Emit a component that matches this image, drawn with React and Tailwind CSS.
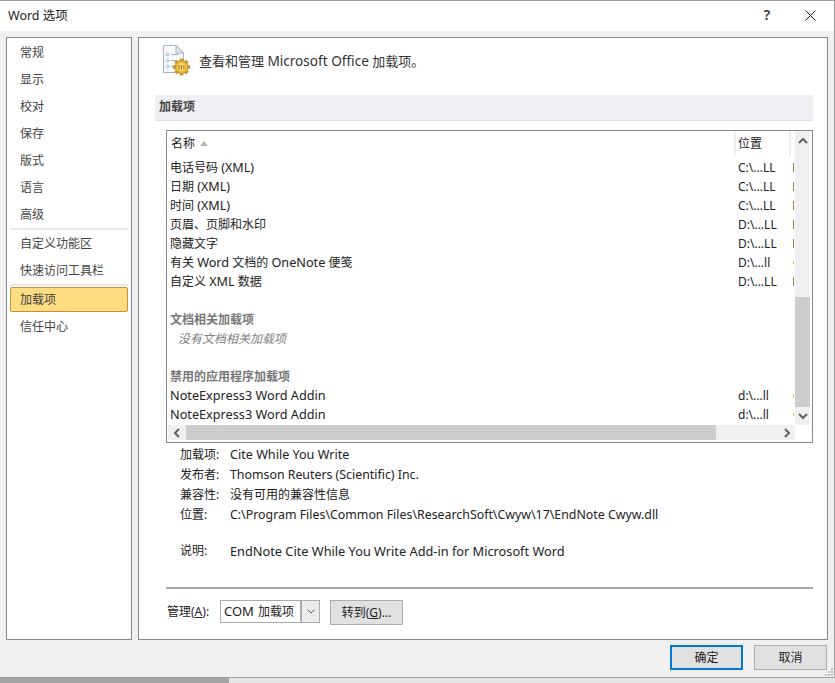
import React from "react";

const side1 = ["常规", "显示", "校对", "保存", "版式", "语言", "高级"];
const rows = [
  { n: <>电话号码 <span className="text-[12.6px]">(XML)</span></>, l: "C:\\...LL", c: "dark", shift: true },
  { n: <>日期 <span className="text-[12.6px]">(XML)</span></>, l: "C:\\...LL", c: "dark", shift: true },
  { n: <>时间 <span className="text-[12.6px]">(XML)</span></>, l: "C:\\...LL", c: "dark", shift: true },
  { n: "页眉、页脚和水印", l: "D:\\...LL", c: "dark" },
  { n: "隐藏文字", l: "D:\\...LL", c: "dark" },
  { n: <>有关 <span className="text-[12.7px]">Word</span> 文档的 <span className="text-[12.7px]">OneNote</span> 便笺</>, l: "D:\\...ll", c: "gold" },
  { n: <>自定义 <span className="text-[12.6px]">XML</span> 数据</>, l: "D:\\...LL", c: "dark", shift: true },
];

function SideItem({ children, active }) {
  return (
    <div className={active
      ? "mx-[3px] h-[25px] my-px pl-[9px] flex items-center rounded-[2px] border border-[#c2903f] bg-[#fddc82] text-[#444444]"
      : "h-[27px] pl-[13px] flex items-center text-[#444444]"}>
      {children}
    </div>
  );
}

function Row({ n, l, c, shift }) {
  return (
    <div className="h-[19px] flex items-center text-[#222222]">
      <div className={"w-[571px] pl-[3px] whitespace-nowrap " + (shift ? "pt-[2px]" : "")}>{n}</div>
      <div className="w-[55px] whitespace-nowrap">{l}</div>
      <div className={c === "gold" ? "w-px h-[3px] bg-[#e0b050]" : "w-px h-[9px] bg-[#a08040]"} />
    </div>
  );
}

function Detail({ k, v, cls }) {
  return (
    <div className="h-5 flex items-center text-[#222222]">
      <div className="w-[50px] whitespace-nowrap">{k}</div>
      <div className={"whitespace-nowrap " + (cls || "")}>{v}</div>
    </div>
  );
}

function Arrow({ dir }) {
  const d = { up: "M1 6 L5 2 L9 6", down: "M1 2 L5 6 L9 2", left: "M6 1 L2 5 L6 9", right: "M2 1 L6 5 L2 9" }[dir];
  return (
    <svg width="10" height="10" viewBox="0 0 10 10" fill="none" stroke="#606060" strokeWidth="2"><path d={d} transform={dir === "up" || dir === "down" ? "translate(0,1)" : "translate(1,0)"} /></svg>
  );
}

function AddinIcon() {
  const teeth = [0, 45, 90, 135, 180, 225, 270, 315];
  return (
    <svg width="28" height="31" viewBox="0 0 28 31" className="shrink-0">
      <path d="M0.5 0.5 H13 L20.5 8 V27.5 H0.5 Z" fill="#f8fafd" stroke="#a3b2c6" />
      <path d="M13 0.5 V8 H20.5 Z" fill="#dfe6ef" stroke="#a3b2c6" />
      <g stroke="#9fb0c8" fill="none">
        <path d="M8 9.5 H16 M8 15.5 H13 M8 21.5 H11" />
        <circle cx="4.5" cy="9.5" r="1.3" />
        <circle cx="4.5" cy="15.5" r="1.3" />
        <circle cx="4.5" cy="21.5" r="1.3" />
      </g>
      <g transform="translate(18.5 22)">
        {teeth.map((a) => (
          <rect key={a} x="-1.8" y="-8.5" width="3.6" height="4" fill="#c8952a" transform={`rotate(${a})`} />
        ))}
        <circle r="6.5" fill="#e8b83e" stroke="#b98a28" strokeWidth="0.8" />
        <circle r="4" fill="#f6d66e" />
        <path d="M-2.4 -2 V2.4 M0 -2 V2.4 M2.4 -2 V2.4" stroke="#a8791f" strokeWidth="1" />
      </g>
    </svg>
  );
}

export default function App() {
  return (
    <div className="w-[835px] h-[683px] flex flex-col bg-[#a8a8a8] text-[12px] leading-none font-['Noto_Sans','Noto_Sans_CJK_SC',sans-serif] overflow-hidden">
      <div className="h-[678px] flex flex-col bg-[#f0f0f0] border-t border-b border-r border-[#a0a0a0]">
        <div className="h-[30px] bg-white flex items-center shrink-0">
          <div className="pl-2 text-[12.5px] text-[#222222]">Word 选项</div>
          <div className="ml-auto w-[24px] text-center text-[14px] text-[#333333] font-semibold mr-[26px] mb-[2px]">?</div>
          <svg width="11" height="11" viewBox="0 0 11 11" fill="none" stroke="#222222" className="mr-[18px] mb-[2px]"><path d="M0.5 0.5 L10.5 10.5 M10.5 0.5 L0.5 10.5" /></svg>
        </div>

        <div className="flex gap-[6px] pl-[6px] pt-[6px] h-[609px] shrink-0">
          <div className="w-[126px] h-[603px] bg-white border border-[#828790] pt-px">
            {side1.map((s) => <SideItem key={s}>{s}</SideItem>)}
            <div className="h-[2px] mx-[3px] bg-[#e8e8ec]" />
            <SideItem>自定义功能区</SideItem>
            <SideItem>快速访问工具栏</SideItem>
            <div className="h-[2px] mx-[3px] bg-[#e8e8ec]" />
            <SideItem active>加载项</SideItem>
            <SideItem>信任中心</SideItem>
          </div>

          <div className="w-[690px] h-[603px] bg-white border border-[#828790] pl-4 pr-[14px] flex flex-col">
            <div className="h-[57px] flex items-center pl-2 pb-[12px] gap-2 shrink-0">
              <AddinIcon />
              <div className="text-[13px] text-[#333333] whitespace-nowrap">查看和管理 <span className="text-[13.6px]">Microsoft Office</span> 加载项。</div>
            </div>
            <div className="h-[26px] bg-[#eff0f3] border-b border-[#e1e1e1] flex items-center pl-1 pb-[2px] font-semibold text-[#444444] shrink-0">加载项</div>

            <div className="mt-[9px] ml-[11px] mr-0 h-[313px] border border-[#828790] flex flex-col shrink-0">
              <div className="flex h-[294px]">
                <div className="w-[628px] flex flex-col">
                  <div className="h-[25px] flex items-center text-[#222222] shrink-0">
                    <div className="w-[569px] h-full pl-[4px] flex items-center border-r-2 border-[#eeeeee] gap-[5px]">
                      名称
                      <svg width="8" height="5" viewBox="0 0 8 5"><path d="M0 5 L4 0 L8 5 Z" fill="#b8b8a8" /></svg>
                    </div>
                    <div className="w-[55px] h-full pl-[2px] flex items-center border-r-2 border-[#eeeeee]">位置</div>
                  </div>
                  <div className="pt-[2px]">
                    {rows.map((r, i) => <Row key={i} {...r} />)}
                    <div className="h-[19px]" />
                    <div className="h-[19px] pl-[3px] flex items-center font-semibold text-[#777777]">文档相关加载项</div>
                    <div className="h-[19px] pl-[11px] flex items-center italic text-[#808080]">没有文档相关加载项</div>
                    <div className="h-[19px]" />
                    <div className="h-[19px] pl-[3px] flex items-center font-semibold text-[#777777]">禁用的应用程序加载项</div>
                    <Row n={<span className="text-[12.7px]">NoteExpress3 Word Addin</span>} l="d:\...ll" c="gold" />
                    <Row n={<span className="text-[12.7px]">NoteExpress3 Word Addin</span>} l="d:\...ll" c="gold" />
                  </div>
                </div>
                <div className="w-[15px] h-[294px] bg-[#f0f0f0] flex flex-col items-center">
                  <div className="h-[20px] flex items-center"><Arrow dir="up" /></div>
                  <div className="mt-[146px] w-full h-[110px] bg-[#cdcdcd]" />
                  <div className="flex-1 flex items-center"><Arrow dir="down" /></div>
                </div>
              </div>
              <div className="h-[15px] ml-px w-[627px] bg-[#f0f0f0] flex items-center">
                <div className="w-[18px] flex justify-center"><Arrow dir="left" /></div>
                <div className="w-[530px] h-full bg-[#cdcdcd]" />
                <div className="flex-1 flex justify-end pr-[3px]"><Arrow dir="right" /></div>
              </div>
            </div>

            <div className="ml-[25px] mt-[2px] shrink-0">
              <Detail k="加载项:" v="Cite While You Write" cls="text-[12.6px]" />
              <Detail k="发布者:" v="Thomson Reuters (Scientific) Inc." cls="text-[12.35px]" />
              <Detail k="兼容性:" v="没有可用的兼容性信息" />
              <Detail k="位置:" v="C:\Program Files\Common Files\ResearchSoft\Cwyw\17\EndNote Cwyw.dll" cls="text-[12.37px]" />
              <div className="h-[16px]" />
              <Detail k="说明:" v="EndNote Cite While You Write Add-in for Microsoft Word" cls="text-[12.75px]" />
            </div>

            <div className="mt-[26px] ml-[11px] h-[2px] bg-[#a8a8a8] shrink-0" />
            <div className="mt-[11px] ml-[12px] flex items-start text-[#222222] shrink-0">
              <div className="w-[53px] h-[23px] flex items-center whitespace-nowrap">管理(<span className="underline">A</span>):</div>
              <div className="w-[100px] h-[23px] bg-white border border-[#ababab] flex items-stretch">
                <div className="flex-1 pl-[3px] flex items-center whitespace-nowrap"><span className="text-[13px] mr-[4px]">COM</span>加载项</div>
                <div className="w-[19px] bg-[#ececec] border-l-2 border-[#ababab] flex items-center justify-center">
                  <svg width="8" height="5" viewBox="0 0 8 5" fill="none" stroke="#606060"><path d="M0.5 0.5 L4 4 L7.5 0.5" /></svg>
                </div>
              </div>
              <div className="ml-[10px] w-[73px] h-[25px] bg-[#e1e1e1] border border-[#adadad] flex items-center justify-center">转到(<span className="underline">G</span>)...</div>
            </div>
          </div>
        </div>

        <div className="flex-1 flex justify-end pt-[5px] relative">
          <div className="w-[73px] h-[25px] bg-[#e1e1e1] border-2 border-[#0078d7] flex items-center justify-center text-[#222222]">确定</div>
          <div className="ml-[11px] mr-[7px] w-[73px] h-[25px] bg-[#e1e1e1] border border-[#adadad] flex items-center justify-center text-[#222222]">取消</div>
          <svg width="10" height="10" viewBox="0 0 10 10" className="absolute right-0 bottom-0" fill="#c0c0c0">
            <rect x="7" y="1" width="2" height="2" /><rect x="4" y="4" width="2" height="2" /><rect x="7" y="4" width="2" height="2" />
            <rect x="1" y="7" width="2" height="2" /><rect x="4" y="7" width="2" height="2" /><rect x="7" y="7" width="2" height="2" />
          </svg>
        </div>
      </div>
      <div className="flex-1 flex">
        <div className="w-[229px] bg-[#a4a4a4]" />
        <div className="flex-1 bg-[#e4e4e4]" />
      </div>
    </div>
  );
}
